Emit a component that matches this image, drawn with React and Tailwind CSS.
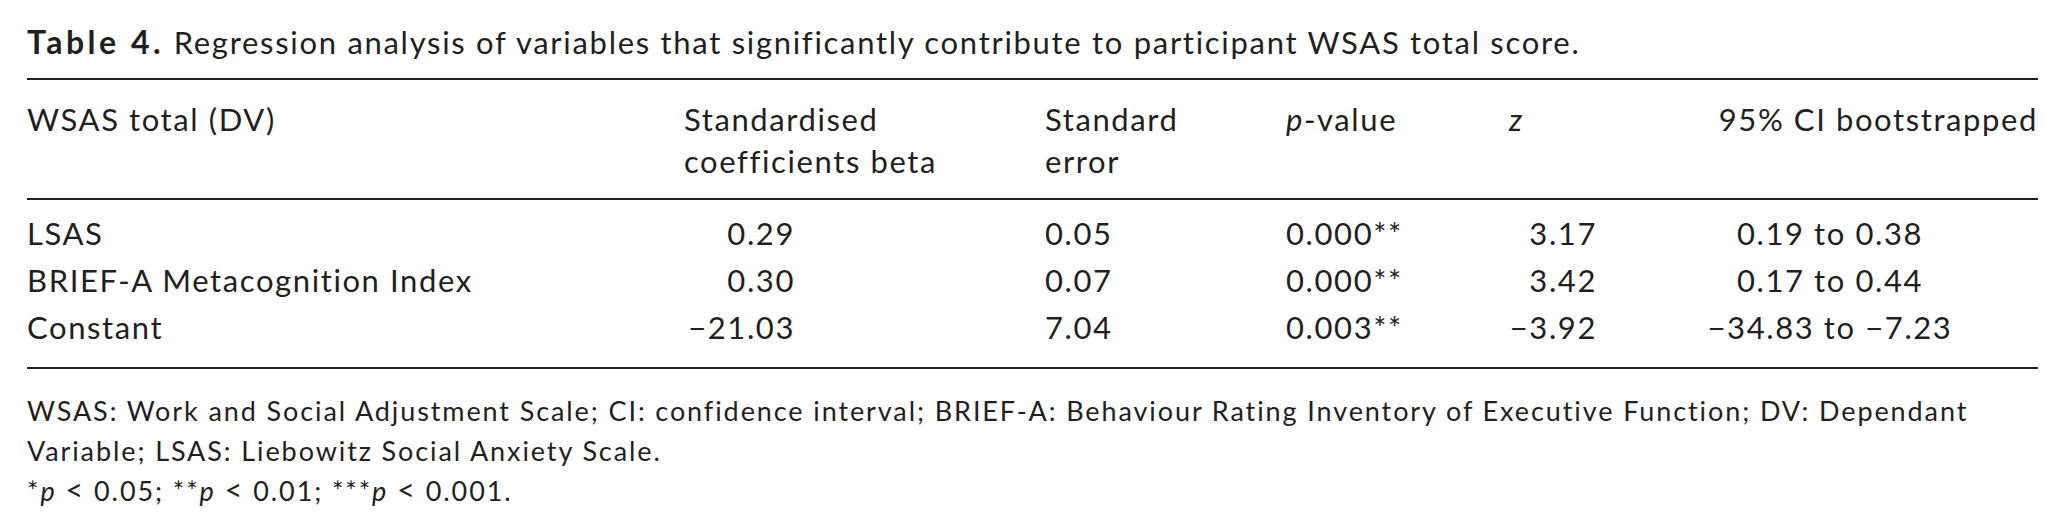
import React from "react";

const rows = [
  { label: "LSAS", beta: "0.29", se: "0.05", p: "0.000**", z: "3.17", ci: "0.19 to 0.38" },
  { label: "BRIEF-A Metacognition Index", beta: "0.30", se: "0.07", p: "0.000**", z: "3.42", ci: "0.17 to 0.44" },
  { label: "Constant", beta: "\u221221.03", se: "7.04", p: "0.003**", z: "\u22123.92", ci: "\u221234.83 to \u22127.23" },
];

const cols = "grid grid-cols-[657px_361px_241px_223px_196px_1fr]";

function App() {
  return (
    <div
      className="w-[2065px] h-[532px] bg-white px-[27px] pt-[22px] text-[#231f20]"
      style={{ fontFamily: "Lato, 'Open Sans', sans-serif" }}
    >
      <p className="text-[31px] leading-[40px] tracking-[1.7px] whitespace-nowrap">
        <span className="font-bold text-[32px] tracking-[3.5px]">Table 4.</span>
        {"  "}Regression analysis of variables that significantly contribute to participant WSAS total score.
      </p>

      <div className="mt-[16px] border-t-2 border-[#231f20]" />

      {/* header */}
      <div className={`${cols} pt-[18px] pb-[16px] text-[31px] leading-[42px] tracking-[1.6px]`}>
        <div>WSAS total (DV)</div>
        <div>
          Standardised
          <br />
          coefficients beta
        </div>
        <div>
          Standard
          <br />
          error
        </div>
        <div>
          <i>p</i>-value
        </div>
        <div>
          <i>z</i>
        </div>
        <div className="text-right">95% CI bootstrapped</div>
      </div>

      <div className="border-t-2 border-[#231f20]" />

      <div className="pt-[10px] pb-[16px]">
        {rows.map((r) => (
          <div key={r.label} className={`${cols} text-[31px] leading-[47px] tracking-[1.6px]`}>
            <div>{r.label}</div>
            <div>
              <div className="w-[111px] text-right">{r.beta}</div>
            </div>
            <div>{r.se}</div>
            <div>{r.p}</div>
            <div>
              <div className="w-[88px] text-right">{r.z}</div>
            </div>
            <div>
              <div className="w-[250px] text-center">{r.ci}</div>
            </div>
          </div>
        ))}
      </div>

      <div className="border-t-2 border-[#231f20]" />

      <div className="pt-[22px] text-[27px] leading-[40px] tracking-[1.9px] whitespace-nowrap">
        <p>
          WSAS: Work and Social Adjustment Scale; CI: confidence interval; BRIEF-A: Behaviour Rating Inventory of Executive Function; DV: Dependant
        </p>
        <p>Variable; LSAS: Liebowitz Social Anxiety Scale.</p>
        <p>
          *<i>p</i> <span className="text-[31px] leading-none">&lt;</span> 0.05; **<i>p</i>{" "}
          <span className="text-[31px] leading-none">&lt;</span> 0.01; ***<i>p</i>{" "}
          <span className="text-[31px] leading-none">&lt;</span> 0.001.
        </p>
      </div>
    </div>
  );
}

export default App;
